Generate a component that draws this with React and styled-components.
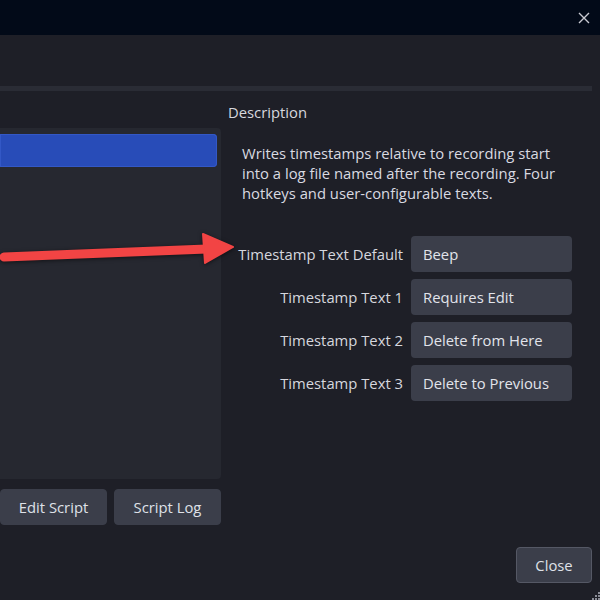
import React from "react"
import styled, { createGlobalStyle } from "styled-components"

const GlobalStyle = createGlobalStyle`
  html, body {
    margin: 0;
    padding: 0;
    background: #1e1f27;
    overflow: hidden;
  }
  body {
    font-family: "Open Sans", "Noto Sans", sans-serif;
    font-size: 14.8px;
    color: #d6d7de;
  }
`

const Window = styled.div`
  position: relative;
  width: 600px;
  height: 600px;
  display: flex;
  flex-direction: column;
  background: #1e1f27;
  overflow: hidden;
`

const TitleBar = styled.div`
  height: 35px;
  flex: none;
  background: #020a18;
  display: flex;
  align-items: center;
  justify-content: flex-end;
  padding-right: 8px;
`

const CloseX = styled.button`
  width: 16px;
  height: 16px;
  padding: 0;
  border: none;
  background: transparent;
  display: flex;
  align-items: center;
  justify-content: center;
  cursor: pointer;
`

const TabStrip = styled.div`
  margin: 51px 8px 0 0;
  height: 5px;
  background: #2a2c35;
`

const Main = styled.div`
  display: flex;
  gap: 7px;
`

const LeftColumn = styled.div`
  width: 221px;
  flex: none;
  display: flex;
  flex-direction: column;
  padding-top: 37px;
`

const ScriptList = styled.div`
  height: 351px;
  background: #262830;
  border-radius: 0 4px 4px 0;
  padding: 6px 4px 0 0;
  box-sizing: border-box;
`

const ScriptItem = styled.div`
  height: 33px;
  border-radius: 0 4px 4px 0;
  background: ${(p) => (p.selected ? "#284cb8" : "transparent")};
  box-shadow: ${(p) => (p.selected ? "inset 0 0 0 1px #3358c6" : "none")};
`

const ButtonRow = styled.div`
  display: flex;
  justify-content: flex-end;
  gap: 7px;
  margin-top: 10px;
`

const Button = styled.button`
  width: ${(p) => p.width || 107}px;
  height: 36px;
  border-radius: 4px;
  border: 1px solid ${(p) => (p.outlined ? "#555865" : "#3b3e4a")};
  background: #3b3e4a;
  color: #dfe1e8;
  font-family: "Open Sans", "Noto Sans", sans-serif;
  font-size: 14.8px;
  padding: 0;
  cursor: pointer;
`

const RightColumn = styled.div`
  flex: 1;
  display: flex;
  flex-direction: column;
  padding-top: 11px;
`

const SectionLabel = styled.div`
  line-height: 20px;
`

const Description = styled.p`
  margin: 21px 0 0 14px;
  line-height: 20px;
  width: 322px;
  color: #d9dae1;
`

const Form = styled.div`
  display: flex;
  flex-direction: column;
  gap: 7px;
  margin-top: 33px;
`

const FormRow = styled.label`
  display: flex;
  align-items: center;
  justify-content: flex-end;
  gap: 8px;
  width: 344px;
`

const FieldLabel = styled.span`
  white-space: nowrap;
`

const TextInput = styled.input`
  width: 161px;
  height: 36px;
  box-sizing: border-box;
  border: none;
  border-radius: 4px;
  background: #3b3e4a;
  color: #e2e4eb;
  font-family: "Open Sans", "Noto Sans", sans-serif;
  font-size: 14.8px;
  padding: 0 12px;
  outline: none;
`

const Footer = styled.div`
  display: flex;
  justify-content: flex-end;
  padding: 22px 8px 0 0;
`

const ResizeGrip = styled.svg`
  position: absolute;
  right: 0;
  bottom: 0;
`

const Annotation = styled.svg`
  position: absolute;
  left: 0;
  top: 0;
  pointer-events: none;
  filter: drop-shadow(0 1px 2px rgba(0, 0, 0, 0.55));
`

const fields = [
  ["Timestamp Text Default", "Beep"],
  ["Timestamp Text 1", "Requires Edit"],
  ["Timestamp Text 2", "Delete from Here"],
  ["Timestamp Text 3", "Delete to Previous"],
]

export default function App() {
  return (
    <>
      <GlobalStyle />
      <Window>
        <TitleBar>
          <CloseX aria-label="Close">
            <svg width="12" height="12" viewBox="0 0 12 12">
              <path d="M1 1L11 11M11 1L1 11" stroke="#c9cad2" strokeWidth="1.4" />
            </svg>
          </CloseX>
        </TitleBar>
        <TabStrip />
        <Main>
          <LeftColumn>
            <ScriptList>
              <ScriptItem selected />
            </ScriptList>
            <ButtonRow>
              <Button width={107}>Edit Script</Button>
              <Button width={107}>Script Log</Button>
            </ButtonRow>
          </LeftColumn>
          <RightColumn>
            <SectionLabel>Description</SectionLabel>
            <Description>
              Writes timestamps relative to recording start into a log file named after the
              recording. Four hotkeys and user-configurable texts.
            </Description>
            <Form>
              {fields.map(([label, value]) => (
                <FormRow key={label}>
                  <FieldLabel>{label}</FieldLabel>
                  <TextInput defaultValue={value} />
                </FormRow>
              ))}
            </Form>
          </RightColumn>
        </Main>
        <Footer>
          <Button width={76} outlined>
            Close
          </Button>
        </Footer>
        <ResizeGrip width="8" height="8" viewBox="0 0 8 8">
          <rect x="6" y="0" width="2" height="2" fill="#8a8c96" />
          <rect x="3" y="3" width="2" height="2" fill="#8a8c96" />
          <rect x="6" y="3" width="2" height="2" fill="#8a8c96" />
          <rect x="0" y="6" width="2" height="2" fill="#8a8c96" />
          <rect x="3" y="6" width="2" height="2" fill="#8a8c96" />
          <rect x="6" y="6" width="2" height="2" fill="#8a8c96" />
        </ResizeGrip>
        <Annotation width="600" height="600" viewBox="0 0 600 600">
          <path d="M4 257L207 249" stroke="#f24444" strokeWidth="9" strokeLinecap="round" />
          <path d="M203 234L233 247L205 263Z" fill="#f24444" stroke="#f24444" strokeWidth="2" strokeLinejoin="round" />
        </Annotation>
      </Window>
    </>
  )
}
